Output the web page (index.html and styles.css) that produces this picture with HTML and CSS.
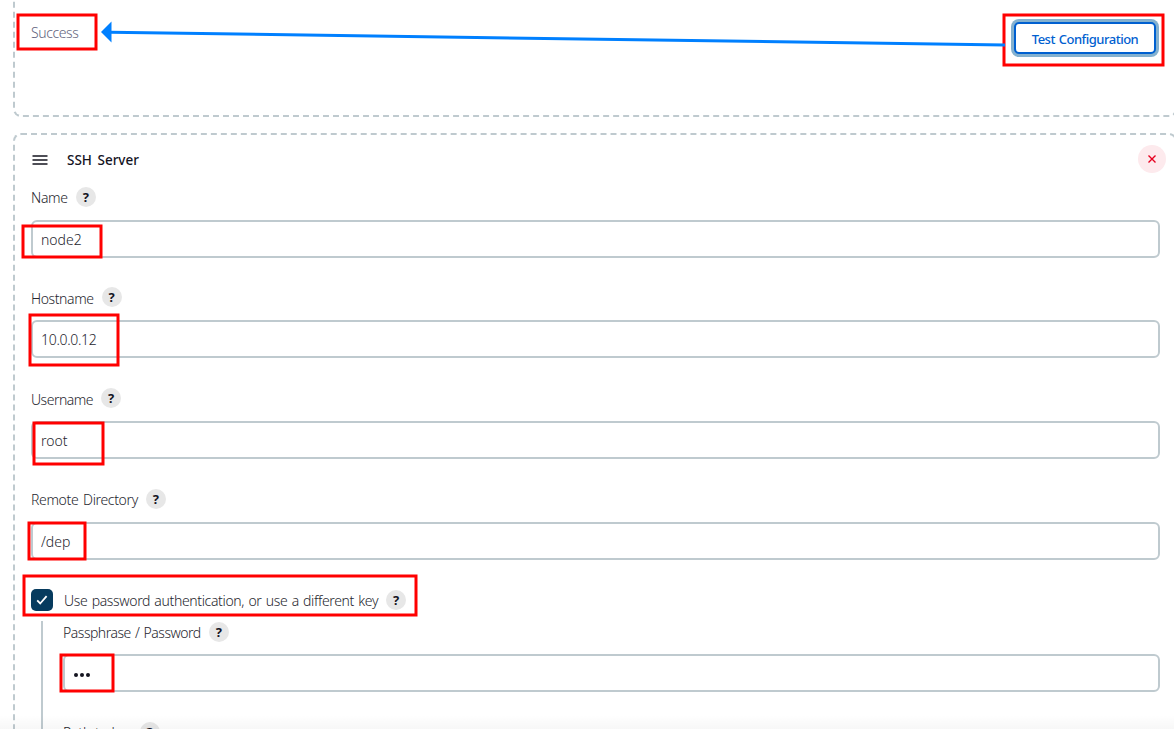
FILE: index.html
```html
<!DOCTYPE html>
<html lang="en">

<head>
    <meta charset="UTF-8">
    <meta name="viewport" content="width=device-width, initial-scale=1.0">
    <title>SSH Servers</title>
    <link rel="stylesheet" href="styles.css">
</head>

<body>
    <div class="card card-prev">
        <span class="status">Success</span>
        <button class="test-btn">Test Configuration</button>
    </div>

    <div class="card card-server">
        <div class="card-head">
            <svg class="drag" width="16" height="10" viewBox="0 0 16 10">
                <path d="M0.5 1h15M0.5 5h15M0.5 9h15" stroke="#14141f" stroke-width="1.5" />
            </svg>
            <span class="title">SSH Server</span>
            <button class="close">
                <svg width="8" height="8" viewBox="0 0 8 8">
                    <path d="M0.5 0.5l7 7M7.5 0.5l-7 7" stroke="#e6001f" stroke-width="1.4" />
                </svg>
            </button>
        </div>
        <div class="field">
            <div class="label"><span class="t-name">Name</span><span class="help">?</span></div>
            <input class="input" type="text" value="node2">
        </div>
        <div class="field">
            <div class="label"><span class="t-host">Hostname</span><span class="help">?</span></div>
            <input class="input t-ip" type="text" value="10.0.0.12">
        </div>
        <div class="field">
            <div class="label"><span class="t-user">Username</span><span class="help">?</span></div>
            <input class="input" type="text" value="root">
        </div>
        <div class="field">
            <div class="label"><span class="t-dir">Remote Directory</span><span class="help">?</span></div>
            <input class="input" type="text" value="/dep">
        </div>
        <div class="check-row">
            <span class="checkbox">
                <svg width="12" height="10" viewBox="0 0 12 10">
                    <path d="M1.2 5.4l3 3.1L10.6 1.2" fill="none" stroke="#fff" stroke-width="1.8" />
                </svg>
            </span>
            <span class="t-auth">Use password authentication, or use a different key</span><span class="help">?</span>
        </div>
        <div class="nested">
            <div class="field">
                <div class="label"><span class="t-pass">Passphrase / Password</span><span class="help">?</span></div>
                <div class="input dots"><i></i><i></i><i></i></div>
            </div>
            <div class="field">
                <div class="label"><span class="t-path">Path to key</span><span class="help">?</span></div>
            </div>
        </div>
    </div>

    <div class="bottom-fade"></div>

    <!-- marks -->
    <svg class="marks" width="1174" height="729" viewBox="0 0 1174 729">
        <g fill="none" stroke="#ff0000" stroke-width="3">
            <rect x="18" y="15" width="78" height="34" />
            <rect x="1004" y="15" width="159" height="50" />
            <rect x="23" y="226" width="78" height="31" />
            <rect x="30" y="315" width="88" height="50" />
            <rect x="34" y="423" width="69" height="41" />
            <rect x="29" y="523" width="56" height="36" />
            <rect x="24" y="576" width="392" height="39" />
            <rect x="61" y="655" width="52" height="36" />
        </g>
        <path d="M1005 45L110 32.3" stroke="#0080ff" stroke-width="3" />
        <path d="M101 32l10.5-10.5v21z" fill="#0080ff" />
    </svg>
</body>

</html>
```

FILE: styles.css
```css
* {
    box-sizing: border-box;
}

body {
    margin: 0;
    height: 729px;
    overflow: hidden;
    position: relative;
    background: #fff;
    color: #26262e;
    font-family: "Noto Sans", "Open Sans", sans-serif;
    font-size: 14px;
    font-weight: 300;
}

.card {
    width: 1164px;
    margin-left: 13px;
    border: 2px dashed #bfcacf;
    border-radius: 8px;
}

.card-prev {
    display: flex;
    justify-content: space-between;
    align-items: flex-start;
    height: 147px;
    margin-top: -30px;
    padding: 50px 19px 0 16px;
}

.status {
    color: #62627c;
    line-height: 22px;
    font-size: 14px;
    letter-spacing: -0.4px;
}

.test-btn {
    width: 142px;
    height: 32px;
    padding: 1px 0 0;
    border: 2px solid #0060d0;
    border-radius: 5px;
    box-shadow: 0 0 0 3px #84b1cf;
    background: #fff;
    color: #0060d0;
    font-family: inherit;
    font-size: 13px;
    font-weight: 500;
    letter-spacing: -0.5px;
    word-spacing: 1px;
}

.card-server {
    height: 640px;
    margin-top: 16px;
    padding: 10px 15px 0 16px;
}

.card-head {
    display: flex;
    align-items: center;
    height: 28px;
    margin-right: -6px;
}

.drag {
    margin: 2px 0 0 1px;
}

.title {
    margin: 2px auto 0 19px;
    color: #14141f;
    font-size: 13.5px;
    font-weight: 500;
    word-spacing: 2px;
}

.close {
    display: flex;
    align-items: center;
    justify-content: center;
    width: 28px;
    height: 28px;
    padding: 0;
    border: 0;
    border-radius: 50%;
    background: #fdeaed;
}

.field {
    height: 100.7px;
}

.card-head + .field {
    margin-top: 13.8px;
}

.label,
.check-row {
    display: flex;
    align-items: center;
    height: 20px;
    white-space: nowrap;
}

.label span:first-child,
.t-auth {
    padding-top: 2px;
}

.help {
    width: 20px;
    height: 20px;
    margin-left: 8px;
    border-radius: 50%;
    background: #e7e7e7;
    color: #14141f;
    font-size: 13px;
    font-weight: 700;
    line-height: 20px;
    text-align: center;
}

.t-name {
    letter-spacing: -0.3px;
}

.t-host {
    letter-spacing: -0.4px;
}

.t-user {
    letter-spacing: -0.5px;
}

.t-dir {
    letter-spacing: -0.35px;
    word-spacing: 1.5px;
}

.t-auth {
    letter-spacing: -0.35px;
    word-spacing: 1px;
}

.t-pass {
    letter-spacing: -0.48px;
    word-spacing: 1px;
}

.t-path {
    letter-spacing: -0.2px;
    word-spacing: 0.5px;
}

.input {
    display: block;
    width: 100%;
    height: 38px;
    margin-top: 13px;
    padding: 1px 8px 0;
    border: 2px solid #bfcacf;
    border-radius: 6px;
    background: #fff;
    color: #26262e;
    font: inherit;
}

.t-ip {
    letter-spacing: -0.3px;
}

.check-row {
    height: 22px;
    margin-top: -0.6px;
}

.checkbox {
    display: flex;
    align-items: center;
    justify-content: center;
    width: 22px;
    height: 22px;
    margin-right: 11px;
    border-radius: 5px;
    background: #063b5e;
}

.nested {
    height: 140px;
    margin: 10px 0 0 10px;
    padding: 1px 0 0 20px;
    border-left: 2px solid #bfcacf;
}

.nested .field {
    height: 100px;
}

.nested .input {
    margin-top: 12px;
}

.dots {
    display: flex;
    align-items: center;
    gap: 2px;
    padding: 4px 0 0 9px;
}

.dots i {
    width: 4px;
    height: 4px;
    border-radius: 50%;
    background: #14141f;
}

.bottom-fade {
    position: absolute;
    left: 0;
    right: 0;
    bottom: 0;
    height: 14px;
    background: linear-gradient(rgba(0, 0, 0, 0), rgba(0, 0, 0, 0.03));
}

.marks {
    position: absolute;
    left: 0;
    top: 0;
}
```
